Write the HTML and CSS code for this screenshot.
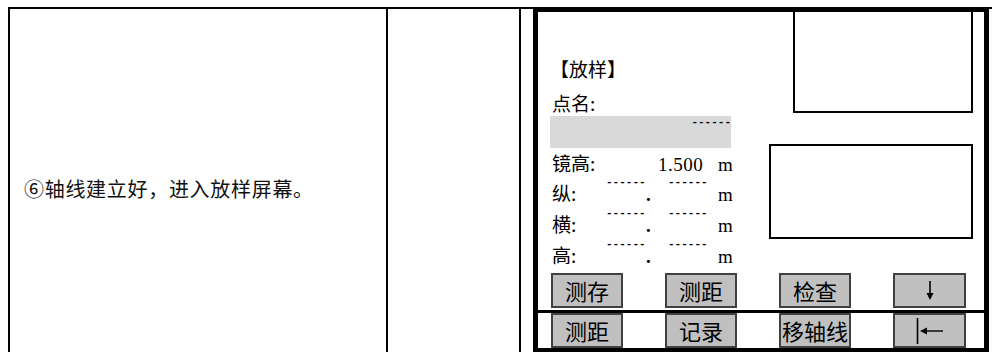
FILE: index.html
```html
<!DOCTYPE html>
<html lang="zh-CN">
<head>
<meta charset="utf-8">
<title>放样</title>
<link rel="stylesheet" href="styles.css">
</head>
<body>
<div class="table">
  <div class="cell cell-desc"><p class="desc">⑥轴线建立好，进入放样屏幕。</p></div>
  <div class="cell cell-empty"></div>
  <div class="cell cell-screen">
    <div class="screen">
      <div class="screen-main">
        <div class="readout">
          <div class="title">【放样】</div>
          <div class="label-line">点名:</div>
          <div class="name-bar"><span class="dashes">------</span></div>
          <div class="row row-hr">
            <span class="lbl">镜高:</span><span class="val">1.500</span><span class="unit">m</span>
          </div>
          <div class="row coord">
            <span class="lbl">纵:</span><span class="dashes d1">------</span><span class="dot">.</span><span class="dashes d2">------</span><span class="unit">m</span>
          </div>
          <div class="row coord">
            <span class="lbl">横:</span><span class="dashes d1">------</span><span class="dot">.</span><span class="dashes d2">------</span><span class="unit">m</span>
          </div>
          <div class="row coord">
            <span class="lbl">高:</span><span class="dashes d1">------</span><span class="dot">.</span><span class="dashes d2">------</span><span class="unit">m</span>
          </div>
        </div>
        <div class="boxes">
          <div class="box box-a"></div>
          <div class="box box-b"></div>
        </div>
      </div>
      <div class="softkeys keys-top">
        <div class="key">测存</div>
        <div class="key">测距</div>
        <div class="key">检查</div>
        <div class="key key-icon">
          <svg width="12" height="22" viewBox="0 0 12 22" aria-label="↓">
            <line x1="6" y1="1" x2="6" y2="18" stroke="#000" stroke-width="1.6"/>
            <polygon points="2.5,13 9.5,13 6,20" fill="#000"/>
          </svg>
        </div>
      </div>
      <div class="softkeys keys-bottom">
        <div class="key">测距</div>
        <div class="key">记录</div>
        <div class="key">移轴线</div>
        <div class="key key-icon">
          <svg width="28" height="28" viewBox="0 0 28 28" aria-label="|←">
            <line x1="1.5" y1="1" x2="1.5" y2="27" stroke="#000" stroke-width="1.6"/>
            <line x1="6" y1="14" x2="27" y2="14" stroke="#000" stroke-width="1.4"/>
            <polygon points="4,14 11,10.5 11,17.5" fill="#000"/>
          </svg>
        </div>
      </div>
    </div>
  </div>
</div>
</body>
</html>
```
FILE: styles.css
```css
* {
  box-sizing: border-box;
  margin: 0;
  padding: 0;
}

html,
body {
  width: 992px;
  height: 352px;
  overflow: hidden;
  background: #fff;
}

body {
  font-family: "Noto Sans CJK SC", "Noto Sans", sans-serif;
  color: #000;
}

.table {
  display: flex;
  margin: 7px 0 0 8px;
  width: 1000px;
  height: 362px;
  border-top: 2px solid #000;
  border-left: 2px solid #000;
}

.cell {
  border-right: 2px solid #000;
  flex: none;
}

.cell-desc {
  width: 378px;
  display: flex;
  align-items: center;
  padding-left: 14px;
}

.desc {
  font-size: 20px;
  line-height: 28px;
  letter-spacing: 0.7px;
  color: #111;
}

.cell-empty {
  width: 133px;
}

.cell-screen {
  flex: 1;
  border-right: none;
  padding-left: 12px;
}

.screen {
  width: 456px;
  height: 346px;
  margin-top: -2px;
  border: 5px solid #000;
  display: flex;
  flex-direction: column;
}

.screen-main {
  display: flex;
  height: 261px;
}

.readout {
  width: 200px;
  padding-left: 12px;
  padding-top: 43px;
  font-size: 19px;
}

.title {
  line-height: 28px;
  height: 28px;
  margin-bottom: 6px;
}

.label-line {
  line-height: 27px;
  height: 27px;
  padding-left: 2px;
}

.name-bar {
  width: 181px;
  height: 32px;
  background: #d9d9d9;
  display: flex;
  justify-content: flex-end;
  align-items: flex-start;
}

.dashes {
  font-family: "Liberation Mono", monospace;
  font-size: 11px;
  font-weight: bold;
  line-height: 11px;
  color: #000;
}

.name-bar .dashes {
  margin-top: 1px;
}

.row {
  display: flex;
  align-items: baseline;
  padding-left: 2px;
}

.row-hr {
  height: 29px;
  line-height: 29px;
}

.coord {
  height: 31px;
  line-height: 31px;
}

.lbl {
  width: 54px;
  flex: none;
}

.val {
  font-family: "Liberation Serif", serif;
  font-size: 19px;
  letter-spacing: 0.5px;
  width: 60px;
  margin-left: 52px;
  flex: none;
}

.unit {
  font-family: "Liberation Serif", serif;
  font-size: 19px;
}

.coord .dashes {
  align-self: flex-start;
  flex: none;
}

.d1 {
  width: 40px;
}

.d2 {
  width: 50px;
}

.dot {
  font-family: "Liberation Serif", serif;
  font-size: 19px;
  font-weight: bold;
  width: 22px;
  flex: none;
}

.boxes {
  margin-left: auto;
  padding-right: 11px;
  display: flex;
  flex-direction: column;
  align-items: flex-end;
}

.box {
  border: 2px solid #000;
}

.box-a {
  width: 180px;
  height: 101px;
  border-top: none;
}

.box-b {
  width: 204px;
  height: 95px;
  margin-top: 31px;
}

.softkeys {
  display: flex;
  padding-left: 13px;
  column-gap: 42px;
}

.keys-top {
  height: 35px;
  margin-bottom: 2px;
}

.keys-bottom {
  height: 38px;
  border-top: 3px solid #000;
}

.key {
  width: 72px;
  height: 35px;
  background: #c0c0c0;
  border: 2px solid #404040;
  display: flex;
  align-items: center;
  justify-content: center;
  overflow: hidden;
  font-size: 22px;
  line-height: 31px;
  white-space: nowrap;
}

.key:last-child {
  width: 73px;
}

.key-icon svg {
  display: block;
}
```
